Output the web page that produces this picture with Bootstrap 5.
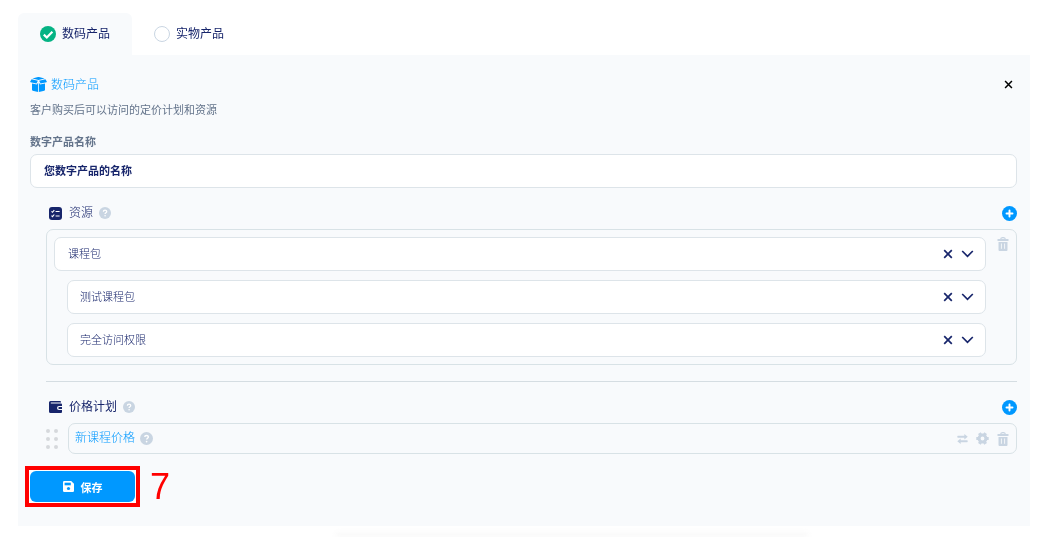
<!DOCTYPE html>
<html lang="zh-CN">
<head>
<meta charset="utf-8">
<meta name="viewport" content="width=device-width, initial-scale=1">
<title>数码产品</title>
<link href="https://cdn.jsdelivr.net/npm/bootstrap@5.3.0/dist/css/bootstrap.min.css" rel="stylesheet">
<style>
  :root { --navy: #17256b; --azure: #0098ff; --line: #dde4e9; --mute: #c9d5e2; --slate: #64748b; --panel: #f8fafc; }
  body { font-family: "Noto Sans CJK SC", sans-serif; font-size: 11px; line-height: 16px; color: var(--navy); background: #fff; }
  svg { display: block; flex: none; }
  .page { padding: 13px 19px 10px 18px; }
  .kind-tab { height: 42px; padding: 0 22px; gap: 6px; font-size: 12px; font-weight: 400; border-radius: 6px 6px 0 0; cursor: pointer; }
  .kind-tab.on { background: var(--panel); }
  .kind-tab input { appearance: none; width: 16px; height: 16px; margin: 0; border: 1px solid var(--mute); border-radius: 50%; background: #fff; }
  .kind-tab input:checked { border: 0; background: #05b384 url("data:image/svg+xml,%3Csvg xmlns='http://www.w3.org/2000/svg' viewBox='0 0 16 16'%3E%3Cpath d='M3.800 8.600l3 2.900L12.400 5.700' fill='none' stroke='%23fff' stroke-width='2.200'/%3E%3C/svg%3E"); }
  .kind-tab span { padding-bottom: 3px; }
  .panel { background: var(--panel); padding: 21px 13px 19px 12px; }
  .title { font-size: 12px; font-weight: 300; color: var(--azure); line-height: 16px; }
  .desc { color: var(--slate); margin: 9px 0 16px; }
  .name-label { color: var(--slate); font-weight: 700; margin-bottom: 5px; line-height: 16px; }
  .field { display: block; width: 100%; height: 34px; border: 1px solid var(--line); border-radius: 7px; background: #fff; color: var(--navy); padding: 0 13px 3px; }
  .name-field { font-weight: 700; }
  .section { padding: 16px 0 0 16px; }
  .section-head { height: 18px; padding-left: 3px; font-size: 12px; }
  .section-head h2 { font-size: 12px; font-weight: 400; line-height: 16px; margin: 0 6px 0 7px; padding-bottom: 2px; }
  .section-head h2.soft { font-weight: 300; }
  .plain { border: 0; padding: 0; background: none; color: inherit; display: block; }
  .outline { border: 1px solid #d8e2e6; border-radius: 7px; margin-top: 7px; }
  .resources { padding: 7px; }
  .resources > .plain { margin-left: 11px; }
  .pickers { row-gap: 9px; }
  .picker { position: relative; }
  .picker.nested { margin-left: 13px; }
  .picker select { appearance: none; font-weight: 300; padding-right: 60px; padding-left: 13px; }
  .picker.nested select { padding-left: 12px; }
  .picker .tools { position: absolute; right: 12px; top: 12px; display: flex; gap: 8px; }
  .picker .chev { pointer-events: none; }
  .rule { border: 0; border-top: 1px solid #d5dde2; opacity: 1; margin: 16px 0; }
  .plan-row { margin-top: 7px; }
  .grip { margin-right: 10px; }
  .plan { height: 31px; margin: 0; padding: 0 7px 0 6px; font-size: 12px; }
  .plan a { color: var(--azure); font-weight: 300; padding-bottom: 4px; margin-right: 5px; }
  .save-row { margin-top: 12px; gap: 10px; }
  .mark-box { border: 4px solid #f00; background: #fff; padding: 1px; margin-left: -5px; }
  .save { width: 105px; height: 31px; border: 0; border-radius: 6px; background: var(--azure); color: #fff; font-size: 11px; font-weight: 700; padding: 0; gap: 7px; }
  .step { font-family: "Liberation Sans", sans-serif; font-size: 36px; line-height: 40px; color: #f00; }
  .glow { position: fixed; left: 32%; right: 23%; bottom: 0; height: 7px; background: linear-gradient(#fff, #f6f6f6); filter: blur(2px); z-index: -1; }
</style>
</head>
<body>
<svg width="0" height="0" class="position-absolute" aria-hidden="true">
  <symbol id="help" viewBox="0 0 12 12"><circle cx="6" cy="6" r="6" fill="#c9d5e2"/><path d="M4.400 4.700C4.400 2.700 7.700 2.700 7.700 4.700 7.700 5.800 6.100 5.800 6.100 7" fill="none" stroke="#fff" stroke-width="1.300"/><circle cx="6.100" cy="8.800" r=".8" fill="#fff"/></symbol>
  <symbol id="plus" viewBox="0 0 14 14"><circle cx="7" cy="7" r="7" fill="#0098ff"/><path d="M7 4.200v5.600M4.200 7h5.600" stroke="#fff" stroke-width="1.800" stroke-linecap="round"/></symbol>
  <symbol id="cross" viewBox="0 0 10 10"><path d="M1.200 1.200l7.600 7.600M8.800 1.200L1.200 8.800" stroke="currentColor" stroke-width="1.700"/></symbol>
  <symbol id="chev" viewBox="0 0 12 10"><path d="M.7 2L6 7.300 11.300 2" fill="none" stroke="currentColor" stroke-width="1.700"/></symbol>
  <symbol id="trash" viewBox="0 0 12 14"><path d="M3.700 2.200C3.700 0 8.300 0 8.300 2.200" fill="none" stroke="#c9d5e2" stroke-width="1.200"/><path d="M.5 2h11v2H.5zM1.500 5h9v8q0 1-1 1h-7q-1 0-1-1z" fill="#c9d5e2"/><path d="M4.400 6.500v5.300M7.600 6.500v5.300" stroke="#f8fafc" stroke-width=".9"/></symbol>
</svg>

<main class="page">
  <div class="d-flex">
    <label class="kind-tab on d-flex align-items-center"><input type="radio" name="kind" checked><span>数码产品</span></label>
    <label class="kind-tab d-flex align-items-center"><input type="radio" name="kind"><span>实物产品</span></label>
  </div>

  <form class="panel">
    <div class="d-flex align-items-center justify-content-between">
      <div class="title d-flex align-items-center gap-1">
        <svg width="17" height="16" viewBox="0 0 17 16" fill="#0098ff"><path d="M2.400 2.500L8 1q.5-.1 1 0l5.600 1.500-6.100 1.600zM1.600 3.300l6.300 1.500-1.500 2.600L.5 6.200Q0 6 .2 5.600zM15.400 3.300L9.100 4.800l1.500 2.600 5.900-1.200q.5-.2.3-.6zM2 7.400l5 1.100 1.100-2v9.400l-5.400-1.200Q2 14.500 2 13.800zM15 7.400l-5 1.100-1.100-2v9.400l5.400-1.200q.7-.2.7-.9z"/></svg>
        <span>数码产品</span>
      </div>
      <button type="button" class="plain text-black me-1" aria-label="关闭"><svg width="9" height="9"><use href="#cross"/></svg></button>
    </div>
    <p class="desc">客户购买后可以访问的定价计划和资源</p>
    <label class="name-label d-block" for="pname">数字产品名称</label>
    <input id="pname" class="field name-field" type="text" value="您数字产品的名称">

    <section class="section">
      <div class="section-head d-flex align-items-center">
        <svg width="13" height="13" viewBox="0 0 13 13"><rect width="13" height="13" rx="3" fill="#17256b"/><path d="M2.500 4.300l1 1L5.300 3.200M2.500 8.600l1 1L5.300 7.500M6.600 4.500h4M6.600 9h4" fill="none" stroke="#fff" stroke-width="1.100"/></svg>
        <h2 class="soft">资源</h2>
        <button type="button" class="plain" aria-label="帮助"><svg width="12" height="12"><use href="#help"/></svg></button>
        <button type="button" class="plain ms-auto" aria-label="添加资源"><svg width="15" height="15"><use href="#plus"/></svg></button>
      </div>
      <div class="outline resources d-flex align-items-start">
        <div class="pickers flex-grow-1 d-grid">
          <div class="picker"><select class="field" aria-label="资源类型"><option>课程包</option></select>
            <div class="tools"><button type="button" class="plain" aria-label="清除"><svg width="10" height="10"><use href="#cross"/></svg></button><svg class="chev" width="13" height="10"><use href="#chev"/></svg></div></div>
          <div class="picker nested"><select class="field" aria-label="课程包"><option>测试课程包</option></select>
            <div class="tools"><button type="button" class="plain" aria-label="清除"><svg width="10" height="10"><use href="#cross"/></svg></button><svg class="chev" width="13" height="10"><use href="#chev"/></svg></div></div>
          <div class="picker nested"><select class="field" aria-label="访问权限"><option>完全访问权限</option></select>
            <div class="tools"><button type="button" class="plain" aria-label="清除"><svg width="10" height="10"><use href="#cross"/></svg></button><svg class="chev" width="13" height="10"><use href="#chev"/></svg></div></div>
        </div>
        <button type="button" class="plain" aria-label="删除资源"><svg width="12" height="14"><use href="#trash"/></svg></button>
      </div>

      <hr class="rule">

      <div class="section-head d-flex align-items-center">
        <svg width="13" height="12" viewBox="0 0 13 12"><path d="M1.500 0H11q1 0 1 1v.6H1.800v.8H12q1 0 1 1V5h-3Q8 5 8 7t2 2h3v2q0 1-1 1H1.500Q0 12 0 10.500v-9Q0 0 1.500 0z" fill="#17256b"/><path d="M10.300 6H13v2h-2.700q-1 0-1-1t1-1z" fill="#17256b"/></svg>
        <h2>价格计划</h2>
        <button type="button" class="plain" aria-label="帮助"><svg width="12" height="12"><use href="#help"/></svg></button>
        <button type="button" class="plain ms-auto" aria-label="添加价格计划"><svg width="15" height="15"><use href="#plus"/></svg></button>
      </div>
      <div class="plan-row d-flex align-items-center">
        <svg class="grip" width="12" height="20" viewBox="0 0 12 20" fill="#d6d8dc"><circle cx="2" cy="2" r="2"/><circle cx="10" cy="2" r="2"/><circle cx="2" cy="10" r="2"/><circle cx="10" cy="10" r="2"/><circle cx="2" cy="18" r="2"/><circle cx="10" cy="18" r="2"/></svg>
        <div class="outline plan flex-grow-1 d-flex align-items-center">
          <a href="#" class="text-decoration-none">新课程价格</a>
          <button type="button" class="plain" aria-label="帮助"><svg width="13" height="13"><use href="#help"/></svg></button>
          <div class="ms-auto d-flex align-items-center gap-2">
            <button type="button" class="plain" aria-label="切换"><svg width="11" height="12" viewBox="0 0 12 12" fill="#c9d5e2"><path d="M1 2.500h7V.5L11.700 3.500 8 6.500V4.700H1q-.7 0-.7-1.100T1 2.500zM11 7.300H4V5.500L.3 8.500 4 11.500v-2h7q.7 0 .7-1.100T11 7.300z"/></svg></button>
            <button type="button" class="plain" aria-label="设置"><svg width="13" height="13" viewBox="0 0 13 13"><circle cx="6.500" cy="6.500" r="3.400" fill="none" stroke="#c9d5e2" stroke-width="3"/><path d="M.3 6.500h2M10.700 6.500h2M3.400 1.100l1 1.700M8.600 10.200l1 1.700M9.600 1.100l-1 1.700M4.400 10.200l-1 1.700" stroke="#c9d5e2" stroke-width="3.200"/></svg></button>
            <button type="button" class="plain" aria-label="删除"><svg width="12" height="14"><use href="#trash"/></svg></button>
          </div>
        </div>
      </div>
    </section>

    <div class="save-row d-flex align-items-center">
      <div class="mark-box"><button type="submit" class="save d-flex align-items-center justify-content-center">
        <svg width="11" height="11" viewBox="0 0 11 11"><path d="M1.200 0h7L11 2.800v7q0 1.200-1.200 1.200H1.200Q0 11 0 9.800V1.200Q0 0 1.200 0z" fill="#fff"/><path d="M1.600 1.700h6.200v2.600H1.600z" fill="#0098ff"/><circle cx="5.500" cy="7.500" r="1.600" fill="#0098ff"/></svg>
        <span>保存</span></button></div>
      <span class="step">7</span>
    </div>
  </form>
</main>
<div class="glow"></div>
<script src="https://cdn.jsdelivr.net/npm/bootstrap@5.3.0/dist/js/bootstrap.bundle.min.js"></script>
</body>
</html>
